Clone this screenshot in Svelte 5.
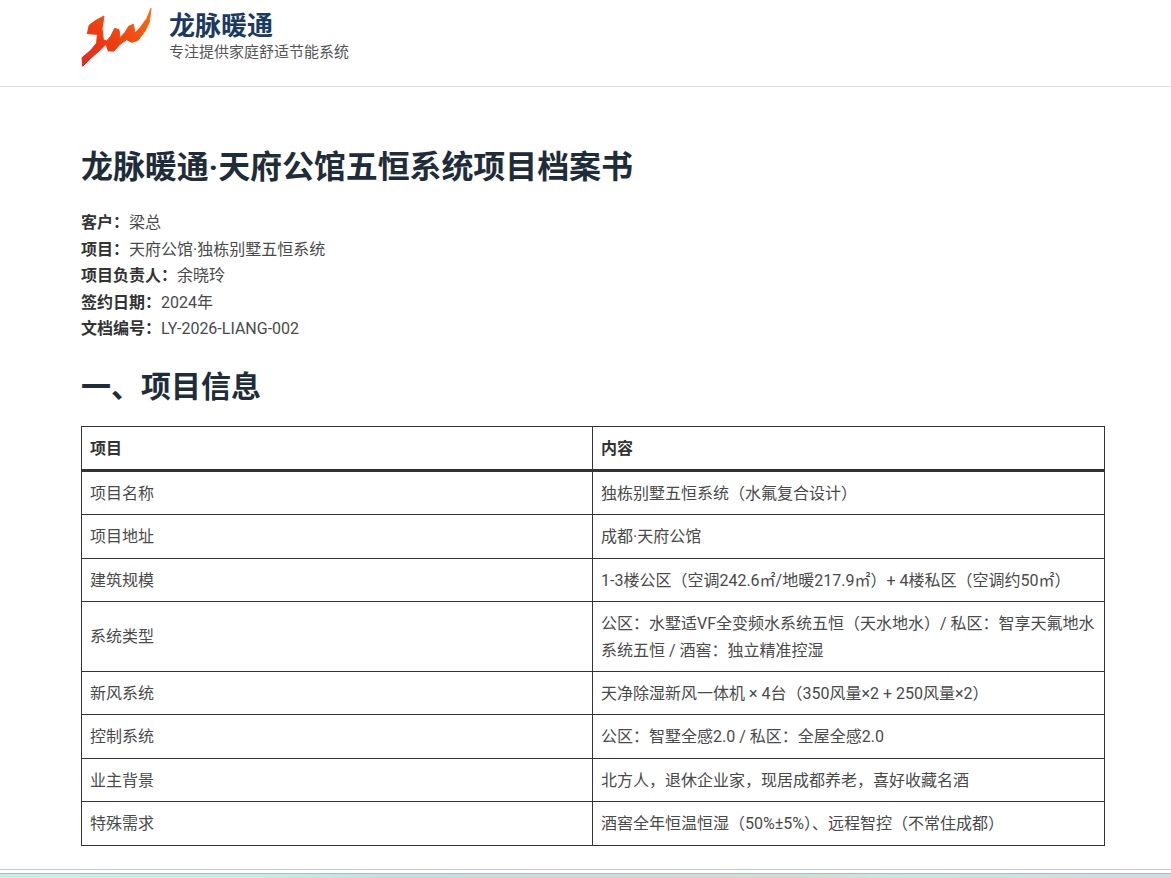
<script lang="ts">
  const meta = [
    ['客户：', '梁总'],
    ['项目：', '天府公馆·独栋别墅五恒系统'],
    ['项目负责人：', '余晓玲'],
    ['签约日期：', '2024年'],
    ['文档编号：', 'LY-2026-LIANG-002']
  ];

  const rows = [
    ['项目名称', '独栋别墅五恒系统（水氟复合设计）'],
    ['项目地址', '成都·天府公馆'],
    ['建筑规模', '1-3楼公区（空调242.6㎡/地暖217.9㎡）+ 4楼私区（空调约50㎡）'],
    ['系统类型', '公区：水墅适VF全变频水系统五恒（天水地水）/ 私区：智享天氟地水系统五恒 / 酒窖：独立精准控湿'],
    ['新风系统', '天净除湿新风一体机 × 4台（350风量×2 + 250风量×2）'],
    ['控制系统', '公区：智墅全感2.0 / 私区：全屋全感2.0'],
    ['业主背景', '北方人，退休企业家，现居成都养老，喜好收藏名酒'],
    ['特殊需求', '酒窖全年恒温恒湿（50%±5%）、远程智控（不常住成都）']
  ];
</script>

<header class="site-header">
  <svg class="logo" viewBox="33 20 213 180" width="71" height="60" aria-hidden="true">
    <defs>
      <linearGradient id="logo-fill" x1="0" y1="1" x2="1" y2="0">
        <stop offset="0" stop-color="#dc2c1e" />
        <stop offset="0.4" stop-color="#f03a10" />
        <stop offset="1" stop-color="#f8700f" />
      </linearGradient>
    </defs>
    <path
      fill="url(#logo-fill)"
      stroke="url(#logo-fill)"
      stroke-width="3"
      stroke-linejoin="round"
      d="M38 198 L36 172 L62 150 L80 128 L82 102 L52 100 L58 74 L78 60 L102 47 L96 85 L100 118 L110 122 L122 108 L134 84 L147 88 L150 112 L165 96 L176 78 L190 72 L195 98 L212 80 L230 55 L243 24 L238 65 L225 92 L204 120 L186 126 L170 118 L150 132 L132 152 L115 152 L108 132 L90 150 L62 174 Z"
    />
  </svg>
  <div class="brand">
    <div class="brand-name">龙脉暖通</div>
    <div class="brand-tag">专注提供家庭舒适节能系统</div>
  </div>
</header>

<main class="doc">
  <h1>龙脉暖通·天府公馆五恒系统项目档案书</h1>

  <div class="meta">
    {#each meta as [label, value]}
      <p><strong>{label}</strong>{value}</p>
    {/each}
  </div>

  <h2>一、项目信息</h2>

  <table>
    <thead>
      <tr>
        <th class="first">项目</th>
        <th>内容</th>
      </tr>
    </thead>
    <tbody>
      {#each rows as [name, content]}
        <tr>
          <td>{name}</td>
          <td>{content}</td>
        </tr>
      {/each}
    </tbody>
  </table>
</main>

<div class="window-edge"></div>
<div class="window-strip"></div>

<style>
  :global(body) {
    background: #fff;
    color: #4a4a4a;
    font-family: Roboto, 'Noto Sans CJK SC', sans-serif;
    font-size: 16px;
    overflow: hidden;
  }

  .site-header {
    display: flex;
    align-items: flex-start;
    gap: 17px;
    height: 79px;
    padding: 7px 81px 0;
    border-bottom: 1px solid #e2e2e2;
  }

  .logo {
    flex: none;
  }

  .brand {
    margin-top: 1px;
  }

  .brand-name {
    font-size: 26px;
    font-weight: 700;
    line-height: 36px;
    color: #1a3a64;
  }

  .brand-tag {
    font-size: 15px;
    line-height: 17px;
    color: #555;
  }

  .doc {
    padding: 58px 66px 0 81px;
  }

  h1 {
    margin: 0 0 21px;
    font-size: 32px;
    line-height: 44px;
    font-weight: 700;
    letter-spacing: -0.1px;
    color: #1f2d3a;
  }

  .meta p {
    margin: 0;
    line-height: 26.5px;
  }

  .meta strong {
    color: #333;
    font-weight: 700;
  }

  h2 {
    margin: 23px 0 18px;
    font-size: 30px;
    line-height: 42px;
    font-weight: 700;
    color: #1f2d3a;
  }

  table {
    width: 100%;
    table-layout: fixed;
    border-collapse: collapse;
    line-height: 26.4px;
  }

  th,
  td {
    padding: 9px 8px 7px;
    border: 1px solid #333;
    text-align: left;
    vertical-align: middle;
  }

  th {
    border-bottom: 3px solid #333;
    color: #333;
    font-weight: 700;
  }

  .first {
    width: 494px;
  }

  .window-edge {
    height: 3px;
    margin-top: 23px;
    border-top: 1px solid #c4c8c8;
  }

  .window-strip {
    height: 5px;
    border-top: 1px solid #aebbb8;
    background: linear-gradient(
      90deg,
      #c4f0e4,
      #c6eee2 22%,
      #c4e0e4 32%,
      #d2dcd2 68%,
      #c8e8e0 76%,
      #ccdde4 100%
    );
  }
</style>
